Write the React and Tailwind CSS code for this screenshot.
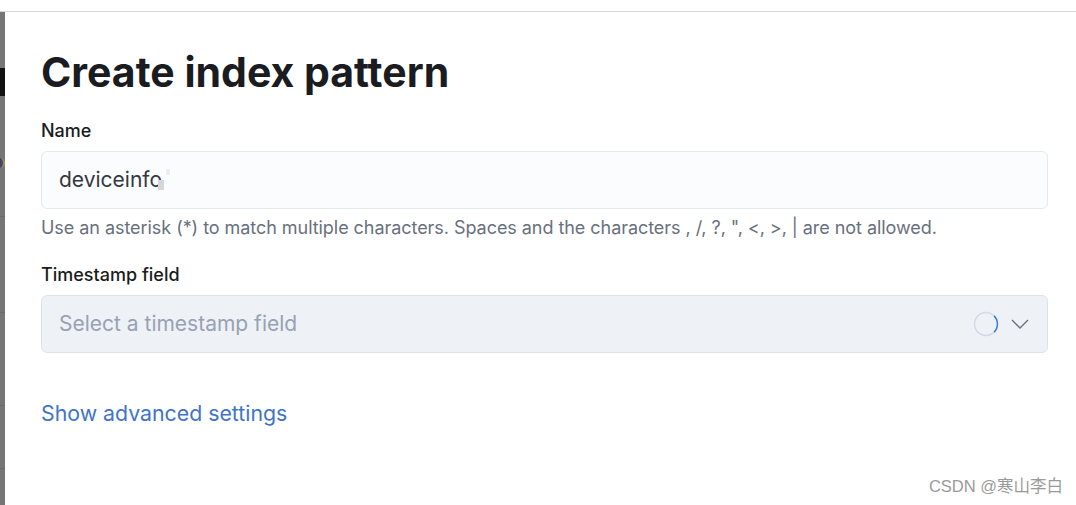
import React from "react";

export default function App() {
  return (
    <div className="relative w-[1076px] h-[505px] bg-white overflow-hidden" style={{ fontFamily: "Inter, 'Noto Sans CJK SC', sans-serif" }}>
      <div className="h-[11px] bg-white" />
      <div className="h-px bg-[#d3d6de]" />
      <div className="flex h-[493px]">
        <div className="w-[5px] bg-[#767676] flex flex-col">
          <div className="h-[56px]" />
          <div className="h-[28px] bg-[#111]" />
          <div className="h-[62px]" />
          <div className="h-[10px] w-[5px] bg-[#3a4a6a] border-r-2 border-[#b58a4a] rounded-r-full" />
          <div className="h-[48px]" />
          <div className="h-px bg-[#6b6b80]" />
          <div className="h-[95px]" />
          <div className="h-px bg-[#6a6a6a]" />
          <div className="h-[92px]" />
          <div className="h-px bg-[#6a6a6a]" />
          <div className="h-[62px]" />
          <div className="h-px bg-[#6a6a6a]" />
        </div>
        <div className="flex-1 pl-[36px] pr-[28px]">
          <h1 className="mt-[35px] text-[41px] leading-[50px] font-bold text-[#1a1c21]">Create index pattern</h1>
          <div className="mt-[23px] text-[18px] leading-[22px] font-medium text-[#1a1c21]">Name</div>
          <div className="mt-[9px] h-[58px] rounded-[6px] border border-[#e3e7ef] bg-[#fbfcfd] flex items-center px-[17px]">
            <span className="text-[21px] text-[#343741]">deviceinfo</span>
            <span className="ml-[-4px] w-[6px] h-[10px] bg-[#d6d6d6] mt-[10px]" />
            <span className="ml-[2px] w-[4px] h-[6px] bg-[#eeeeee] mt-[-16px]" />
          </div>
          <div className="mt-[8px] text-[18px] leading-[22px] text-[#69707d] tracking-[-0.05px]">
            Use an asterisk (*) to match multiple characters. Spaces and the characters , /, ?, ", &lt;, &gt;, | are not allowed.
          </div>
          <div className="mt-[25px] text-[18px] leading-[22px] font-medium text-[#1a1c21]">Timestamp field</div>
          <div className="mt-[9px] h-[58px] rounded-[6px] border border-[#dde2ea] bg-[#eef2f7] flex items-center pl-[17px] pr-[18px]">
            <span className="flex-1 text-[21px] text-[#98a1b3]">Select a timestamp field</span>
            <svg width="26" height="26" viewBox="0 0 26 26" className="mr-[12px]">
              <circle cx="13" cy="13" r="11.5" fill="none" stroke="#d3dae6" strokeWidth="1.5" />
              <path d="M21.1 4.9 A11.5 11.5 0 0 1 21.1 21.1" fill="none" stroke="#3d7ee3" strokeWidth="1.5" />
            </svg>
            <svg width="18" height="10" viewBox="0 0 18 10">
              <path d="M1 1 L9 9 L17 1" fill="none" stroke="#69707d" strokeWidth="1.4" />
            </svg>
          </div>
          <div className="mt-[48px] text-[21.3px] leading-[24px] text-[#3f74c8]">Show advanced settings</div>
        </div>
      </div>
      <div className="absolute right-[13px] bottom-[6px] text-[16.5px] text-[#9a9a9a]" style={{ fontFamily: "'Liberation Sans', 'Noto Sans CJK SC', sans-serif" }}>CSDN @寒山李白</div>
    </div>
  );
}
